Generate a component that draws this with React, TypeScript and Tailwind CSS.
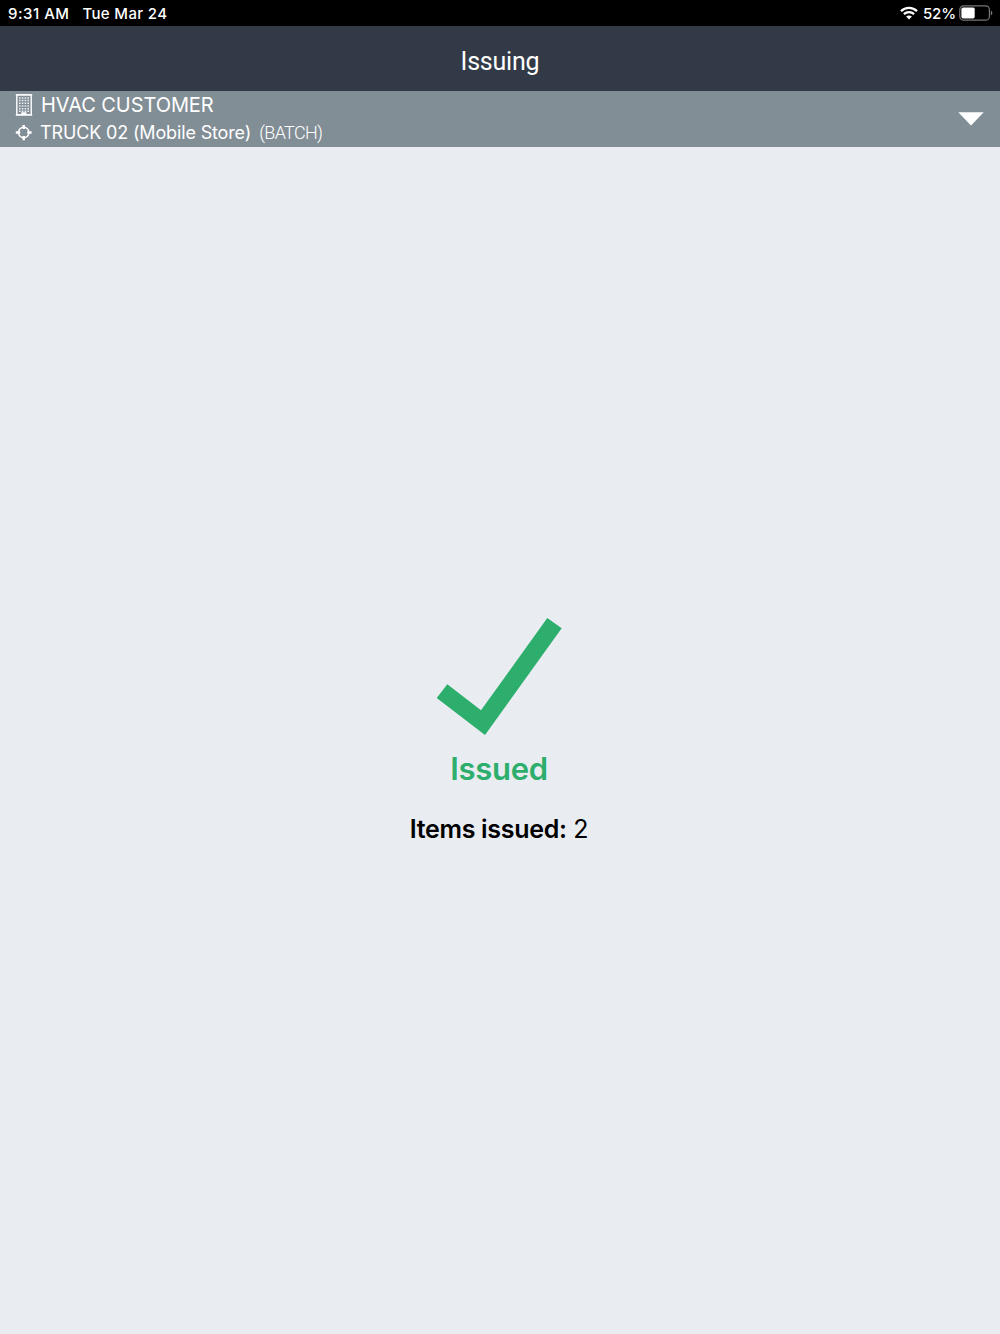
const BuildingIcon = () => (
    <svg width="18" height="22" viewBox="0 0 18 22" fill="none" className="block">
        <path d="M1.8 0.9H16.2V20.9H1.8Z" stroke="white" strokeWidth="1.4" />
        <path d="M0.8 0.9H17.2M0.8 20.9H17.2" stroke="white" strokeWidth="1.2" />
        <path
            d="M4 3.9H14.2M4 6.6H14.2M4 9.3H14.2M4 12H14.2M4 14.7H14.2M4 17.3H14.2"
            stroke="white"
            strokeOpacity="0.85"
            strokeWidth="1.5"
            strokeDasharray="1.6 1.2"
        />
        <path d="M6.3 21V18.2H11.5V21Z" fill="white" />
    </svg>
);

const CrosshairIcon = () => (
    <svg width="17" height="16" viewBox="0 0 17 16" fill="none" className="block">
        <circle cx="8.7" cy="7.5" r="5.2" stroke="white" strokeWidth="1.5" />
        <path d="M8.7 0V4.1M8.7 10.9V15.2M0.8 7.5H5.2M12.2 7.5H16.6" stroke="white" strokeWidth="2.4" />
    </svg>
);

const WifiIcon = () => (
    <svg width="18" height="14" viewBox="0 0 18 14" fill="none" className="block">
        <path d="M1 5.1C5.4 0.7 12.6 0.7 17 5.1" stroke="white" strokeWidth="2.3" />
        <path d="M3.9 8.1C6.8 5.4 11.2 5.4 14.1 8.1" stroke="white" strokeWidth="2.2" />
        <path d="M9 13.6L6.1 10.6C7.7 9.1 10.3 9.1 11.9 10.6Z" fill="white" />
    </svg>
);

const BatteryIcon = () => (
    <svg width="34" height="16" viewBox="0 0 34 16" fill="none" className="block">
        <rect x="0.8" y="0.8" width="29.6" height="14.4" rx="3.8" stroke="#77777a" strokeWidth="1.2" />
        <rect x="2.4" y="2.6" width="13.3" height="10.8" rx="1.6" fill="white" />
        <path d="M31.8 5.5C33.8 6.3 33.8 9.7 31.8 10.5Z" fill="#77777a" />
    </svg>
);

function StatusBar() {
    return (
        <div className="flex h-[26px] items-center justify-between bg-black pl-[8px] pr-[7px] text-[15px] font-medium leading-none text-white">
            <div className="flex gap-[13px]">
                <span className="tracking-[0.5px]">9:31 AM</span>
                <span className="tracking-[0.35px]">Tue Mar 24</span>
            </div>
            <div className="flex items-center">
                <WifiIcon />
                <span className="ml-[5px] mr-[3px] tracking-[-0.1px]">52%</span>
                <BatteryIcon />
            </div>
        </div>
    );
}

function LocationBar() {
    return (
        <div className="flex h-14 items-center justify-between bg-[#828e96] pl-[15px] pr-4 text-white">
            <div className="flex flex-col">
                <div className="flex h-7 items-center gap-2">
                    <BuildingIcon />
                    <span className="text-[20px] leading-7 tracking-[-0.07px]">HVAC CUSTOMER</span>
                </div>
                <div className="flex h-7 items-center">
                    <CrosshairIcon />
                    <span className="ml-2 text-[18px] leading-7 tracking-[-0.15px]">TRUCK 02 (Mobile Store)</span>
                    <span className="ml-2 font-['Roboto',sans-serif] text-[18px] font-light leading-7 tracking-[-0.65px]">
                        (BATCH)
                    </span>
                </div>
            </div>
            <svg width="26" height="14" viewBox="0 0 26 14" className="block">
                <path d="M0.3 0.3H25.7L13 13.5Z" fill="white" />
            </svg>
        </div>
    );
}

export default function App() {
    return (
        <div className="flex h-[1334px] w-[1000px] flex-col overflow-hidden bg-[#e9edf2] font-['Inter','Liberation_Sans',sans-serif]">
            <StatusBar />
            <header className="flex h-[65px] items-center justify-center bg-[#333a47] pt-1.5 font-['Roboto',sans-serif] text-[25px] font-normal tracking-[-0.2px] text-white">
                Issuing
            </header>
            <LocationBar />
            <main className="flex flex-col items-center pr-[2px] pt-[470px]">
                <svg width="126" height="118" viewBox="0 0 126 118" className="block">
                    <path d="M0.7 81L11.3 67.3L45 93.3L111.3 1L125.7 11.3L49 118Z" fill="#2eae6d" />
                </svg>
                <h1 className="mt-3 text-[31px] font-semibold leading-[44px] tracking-[-0.3px] text-[#2eae6d]">Issued</h1>
                <p className="mt-4 text-[25px] leading-[44px] tracking-[-0.3px] text-black">
                    <span className="font-semibold">Items issued:</span> 2
                </p>
            </main>
        </div>
    );
}
